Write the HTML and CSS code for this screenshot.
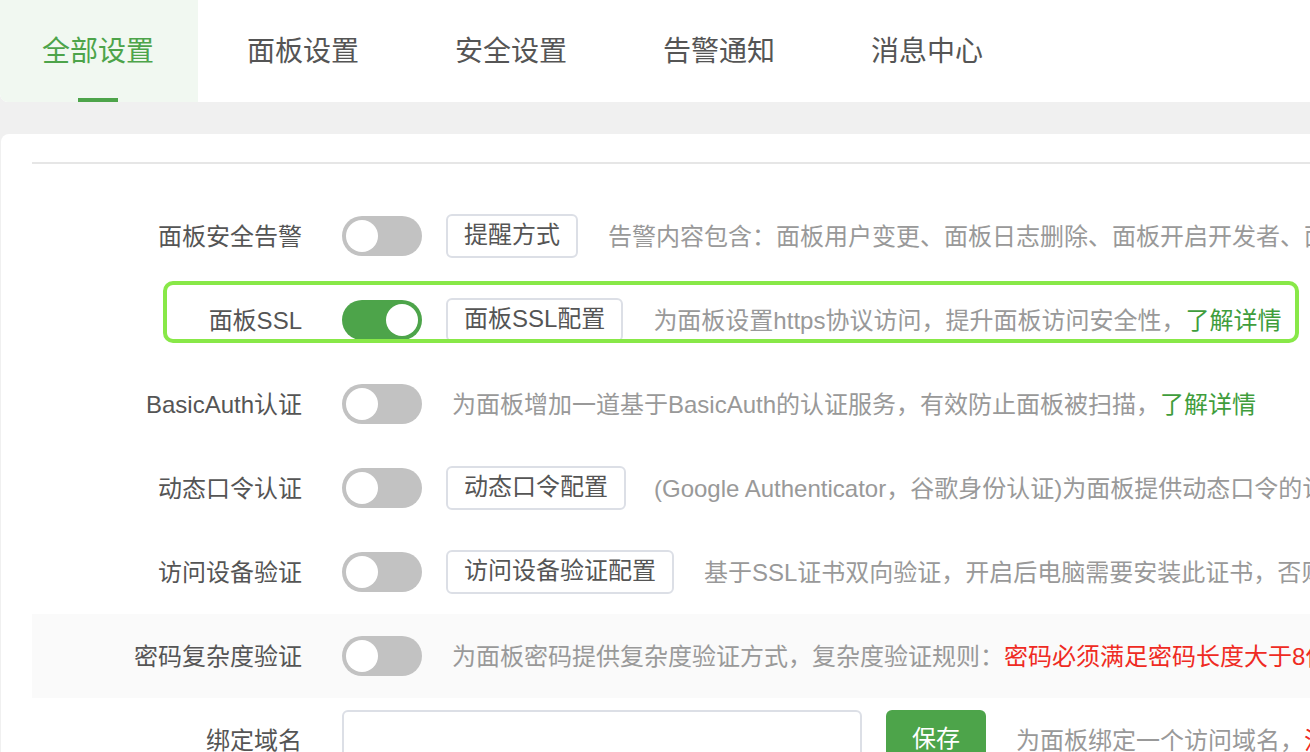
FILE: index.html
```html
<!DOCTYPE html>
<html lang="zh-CN">
<head>
<meta charset="utf-8">
<title>面板设置</title>
<link rel="stylesheet" href="styles.css">
</head>
<body>
<div class="tabs">
  <div class="tab active">全部设置</div>
  <div class="tab">面板设置</div>
  <div class="tab">安全设置</div>
  <div class="tab">告警通知</div>
  <div class="tab">消息中心</div>
</div>
<div class="card">
  <div class="divider"></div>
  <div class="rows">
    <div class="row">
      <div class="label">面板安全告警</div>
      <span class="toggle"></span>
      <span class="btn">提醒方式</span>
      <span class="desc">告警内容包含：面板用户变更、面板日志删除、面板开启开发者、面板开启开发者模式</span>
    </div>
    <div class="row">
      <div class="label">面板SSL</div>
      <span class="toggle on"></span>
      <span class="btn">面板SSL配置</span>
      <span class="desc">为面板设置https协议访问，提升面板访问安全性，<span class="link">了解详情</span></span>
    </div>
    <div class="row">
      <div class="label">BasicAuth认证</div>
      <span class="toggle"></span>
      <span class="desc">为面板增加一道基于BasicAuth的认证服务，有效防止面板被扫描，<span class="link">了解详情</span></span>
    </div>
    <div class="row">
      <div class="label">动态口令认证</div>
      <span class="toggle"></span>
      <span class="btn">动态口令配置</span>
      <span class="desc desc-tight">(Google Authenticator，谷歌身份认证)为面板提供动态口令的认证服务</span>
    </div>
    <div class="row">
      <div class="label">访问设备验证</div>
      <span class="toggle"></span>
      <span class="btn">访问设备验证配置</span>
      <span class="desc">基于SSL证书双向验证，开启后电脑需要安装此证书，否则无法访问面板</span>
    </div>
    <div class="row shaded">
      <div class="label">密码复杂度验证</div>
      <span class="toggle"></span>
      <span class="desc">为面板密码提供复杂度验证方式，复杂度验证规则：<span class="warn">密码必须满足密码长度大于8位，且包含大小写字母</span></span>
    </div>
    <div class="row">
      <div class="label">绑定域名</div>
      <span class="input"></span>
      <span class="save">保存</span>
      <span class="desc">为面板绑定一个访问域名，<span class="warn">注意：一旦绑定域名，只能通过域名访问面板</span></span>
    </div>
  </div>
</div>
<div class="highlight"></div>
</body>
</html>
```
FILE: styles.css
```css
* { box-sizing: border-box; }
html, body { margin: 0; padding: 0; }
body {
  background: #f0f0f0;
  font-family: "Liberation Sans", "Noto Sans CJK SC", sans-serif;
  width: 1310px;
  height: 752px;
  overflow: hidden;
  position: relative;
}
.tabs {
  display: flex;
  gap: 7px;
  height: 102px;
  background: #fff;
  border-radius: 0 0 0 8px;
}
.tab {
  position: relative;
  width: 201px;
  height: 102px;
  padding-left: 42px;
  font-size: 28px;
  line-height: 104px;
  color: #555;
  white-space: nowrap;
}
.tab.active {
  width: 198px;
  background: #f1f8f1;
  color: #4da44a;
  border-radius: 0 0 0 8px;
}
.tab.active::after {
  content: "";
  position: absolute;
  left: 78px;
  bottom: 0;
  width: 40px;
  height: 4px;
  background: #4da44a;
}
.card {
  margin-top: 32px;
  margin-left: 1px;
  background: #fff;
  border-radius: 8px 0 0 0;
  padding: 28px 0 0 31px;
  height: 700px;
}
.divider {
  height: 2px;
  background: #e6e6e6;
}
.rows {
  margin-top: 30px;
}
.row {
  display: flex;
  align-items: center;
  height: 84px;
  white-space: nowrap;
  overflow: hidden;
  font-size: 24px;
}
.row.shaded { background: #fafafa; }
.label {
  width: 270px;
  flex: none;
  text-align: right;
  color: #555;
  margin-right: 40px;
  margin-top: -4px;
}
.toggle {
  position: relative;
  flex: none;
  width: 80px;
  height: 40px;
  border-radius: 20px;
  background: #c2c2c2;
}
.toggle::after {
  content: "";
  position: absolute;
  top: 4px;
  left: 4px;
  width: 32px;
  height: 32px;
  border-radius: 50%;
  background: #fff;
}
.toggle.on { background: #4da44a; }
.toggle.on::after { left: 44px; }
.btn {
  flex: none;
  margin-left: 24px;
  height: 44px;
  line-height: 38px;
  padding: 0 16px;
  border: 2px solid #dcdfe6;
  border-radius: 6px;
  color: #555;
  background: #fff;
}
.desc {
  margin-left: 30px;
  margin-top: -4px;
  color: #999;
}
.desc-tight { margin-left: 28px; }
.link { color: #3f9d3c; }
.warn { color: #ef2b23; }
.input {
  flex: none;
  width: 520px;
  height: 60px;
  border: 2px solid #dcdfe6;
  border-radius: 6px;
  background: #fff;
}
.save {
  flex: none;
  margin-left: 24px;
  width: 100px;
  height: 60px;
  line-height: 58px;
  text-align: center;
  color: #fff;
  background: #4da44a;
  border-radius: 6px;
}
.highlight {
  position: absolute;
  left: 163px;
  top: 281px;
  width: 1136px;
  height: 62px;
  border: 4px solid #88e848;
  border-radius: 10px;
}
```
